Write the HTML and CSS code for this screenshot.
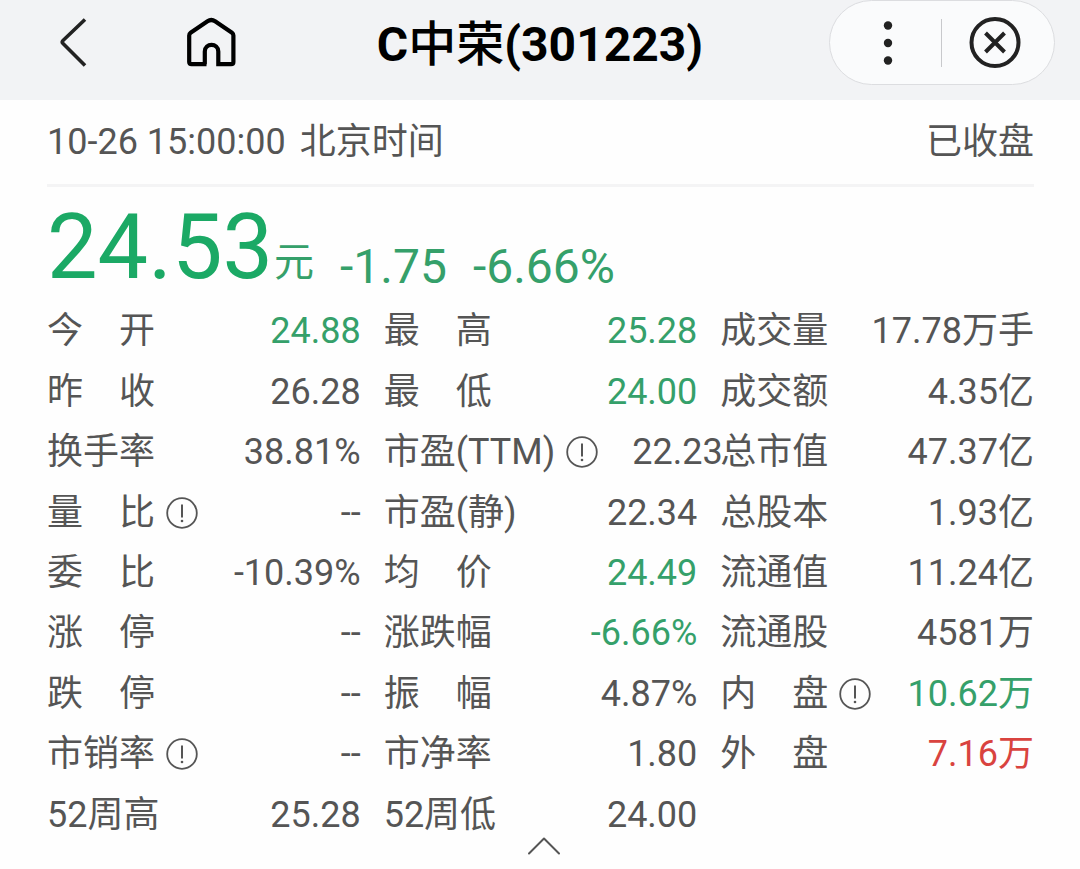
FILE: index.html
```
<!DOCTYPE html>
<html lang="zh-CN">
<head>
  <meta charset="UTF-8">
  <meta name="viewport" content="width=device-width, initial-scale=1.0">
  <title>C中荣(301223)</title>
  <link rel="stylesheet" href="styles.css">
</head>
<body>
  <svg class="sprite" aria-hidden="true">
    <symbol id="info" viewBox="0 0 32 32">
      <circle cx="16" cy="16" r="14.8" fill="none" stroke="currentColor" stroke-width="1.8"/>
      <path d="M16 7.500v13" fill="none" stroke="currentColor" stroke-width="2"/>
      <circle cx="16" cy="24" r="1.300" fill="currentColor"/>
    </symbol>
  </svg>

  <header class="topbar">
    <nav class="nav">
      <button class="icon-btn" type="button" aria-label="返回">
        <svg width="52" height="52" viewBox="0 0 52 52" fill="none" stroke="#222" stroke-width="3.6" stroke-linejoin="round">
          <path d="M38 2.500 L16 23.500 Q14.500 25 16 26.500 L38 48.500"/>
        </svg>
      </button>
      <button class="icon-btn" type="button" aria-label="首页">
        <svg width="52" height="52" viewBox="0 0 52 52" fill="none" stroke="#000" stroke-width="4.200">
          <path d="M20.500 47.200H5.500Q3.200 47.200 3.200 45V18.500Q3.200 16.800 4.600 15.800L21.500 4.300Q25.300 1.700 29.100 4.300L46 15.800Q47.400 16.800 47.400 18.500V45Q47.400 47.200 45.100 47.200H32.300V34.500C32.300 25.600 18.800 25.600 18.800 34.500V47.200"/>
        </svg>
      </button>
    </nav>
    <h1 class="title">C<span class="title-name">中荣</span>(301223)</h1>
    <div class="capsule">
      <button class="capsule-btn" type="button" aria-label="更多">
        <svg width="52" height="52" viewBox="0 0 52 52" fill="#222">
          <circle cx="26" cy="8.500" r="4.200"/>
          <circle cx="26" cy="26" r="4.200"/>
          <circle cx="26" cy="43.500" r="4.200"/>
        </svg>
      </button>
      <span class="capsule-line"></span>
      <button class="capsule-btn" type="button" aria-label="关闭">
        <svg width="52" height="52" viewBox="0 0 52 52" fill="none" stroke="#222" stroke-width="4">
          <circle cx="26" cy="25.500" r="23.500"/>
          <path d="M16.500 16l19 19M35.500 16l-19 19"/>
        </svg>
      </button>
    </div>
  </header>

  <main class="quote">
    <div class="status">
      <span class="time"><span>10-26 15:00:00</span><span>北京时间</span></span>
      <span>已收盘</span>
    </div>

    <div class="price down">
      <span class="price-now">24.53</span>
      <span class="price-unit">元</span>
      <span class="price-change">-1.75</span>
      <span class="price-change">-6.66%</span>
    </div>

    <dl class="stats">
      <div class="stat"><dt>今　开</dt><dd class="down">24.88</dd></div>
      <div class="stat"><dt>最　高</dt><dd class="down">25.28</dd></div>
      <div class="stat"><dt>成交量</dt><dd>17.78万手</dd></div>

      <div class="stat"><dt>昨　收</dt><dd>26.28</dd></div>
      <div class="stat"><dt>最　低</dt><dd class="down">24.00</dd></div>
      <div class="stat"><dt>成交额</dt><dd>4.35亿</dd></div>

      <div class="stat"><dt>换手率</dt><dd>38.81%</dd></div>
      <div class="stat"><dt>市盈(TTM)<button class="info" type="button" aria-label="说明"><svg><use href="#info"/></svg></button></dt><dd>22.23</dd></div>
      <div class="stat"><dt>总市值</dt><dd>47.37亿</dd></div>

      <div class="stat"><dt>量　比<button class="info" type="button" aria-label="说明"><svg><use href="#info"/></svg></button></dt><dd>--</dd></div>
      <div class="stat"><dt>市盈(静)</dt><dd>22.34</dd></div>
      <div class="stat"><dt>总股本</dt><dd>1.93亿</dd></div>

      <div class="stat"><dt>委　比</dt><dd>-10.39%</dd></div>
      <div class="stat"><dt>均　价</dt><dd class="down">24.49</dd></div>
      <div class="stat"><dt>流通值</dt><dd>11.24亿</dd></div>

      <div class="stat"><dt>涨　停</dt><dd>--</dd></div>
      <div class="stat"><dt>涨跌幅</dt><dd class="down">-6.66%</dd></div>
      <div class="stat"><dt>流通股</dt><dd>4581万</dd></div>

      <div class="stat"><dt>跌　停</dt><dd>--</dd></div>
      <div class="stat"><dt>振　幅</dt><dd>4.87%</dd></div>
      <div class="stat"><dt>内　盘<button class="info" type="button" aria-label="说明"><svg><use href="#info"/></svg></button></dt><dd class="down">10.62万</dd></div>

      <div class="stat"><dt>市销率<button class="info" type="button" aria-label="说明"><svg><use href="#info"/></svg></button></dt><dd>--</dd></div>
      <div class="stat"><dt>市净率</dt><dd>1.80</dd></div>
      <div class="stat"><dt>外　盘</dt><dd class="up">7.16万</dd></div>

      <div class="stat"><dt>52周高</dt><dd>25.28</dd></div>
      <div class="stat"><dt>52周低</dt><dd>24.00</dd></div>
    </dl>

    <button class="collapse" type="button" aria-label="收起">
      <svg width="34" height="20" viewBox="0 0 34 20" fill="none" stroke="#555" stroke-width="2" stroke-linecap="round" stroke-linejoin="round">
        <path d="M2 17.500L17 2.500L32 17.500"/>
      </svg>
    </button>
  </main>
</body>
</html>
```

FILE: styles.css
```
* {
  box-sizing: border-box;
}
body {
  font-family: Roboto, "Noto Sans CJK SC", sans-serif;
  font-size: 36px;
  color: #555;
  margin: 0;
  min-height: 100vh;
  display: flex;
  flex-direction: column;
  background: #fefefe;
}
button {
  padding: 0;
  border: none;
  background: none;
  color: inherit;
  cursor: pointer;
}
svg {
  display: block;
}
.sprite {
  display: none;
}

/* top bar */
.topbar {
  display: grid;
  grid-template-columns: 1fr auto 1fr;
  align-items: start;
  height: 100px;
  background: #f2f3f5;
}
.nav {
  display: flex;
  gap: 87px;
  padding: 17px 0 0 47px;
}
.title {
  margin: 0;
  padding-top: 10px;
  font-size: 48px;
  line-height: 70px;
  font-weight: bold;
  color: #000;
}
.title-name {
  font-weight: 500;
}
.capsule {
  justify-self: end;
  display: flex;
  align-items: center;
  justify-content: space-between;
  width: 226px;
  height: 85px;
  margin-right: 25px;
  padding: 0 33px 0 32px;
  border: 1px solid #dcdde0;
  border-radius: 43px;
  background: #fafbfc;
}
.capsule-line {
  width: 1px;
  height: 48px;
  background: #c8c9cc;
}

/* quote */
.quote {
  flex: 1;
  display: flex;
  flex-direction: column;
  position: relative;
  padding: 0 46px 24px 47px;
}
.status {
  display: flex;
  justify-content: space-between;
  line-height: 84px;
  border-bottom: 3px solid #f4f4f5;
}
.time {
  display: flex;
  gap: 14px;
}
.price {
  display: flex;
  align-items: flex-end;
  height: 114px;
  padding-bottom: 8px;
}
.price-now {
  font-size: 90px;
  line-height: 90px;
  color: #1ba965;
}
.price-unit {
  margin: 0 26px 0 1px;
  font-size: 40px;
  line-height: 60px;
}
.price-change {
  margin-right: 26px;
  font-size: 48px;
  line-height: 52px;
}
.stats {
  flex: 1;
  display: grid;
  grid-template-columns: repeat(3, minmax(0, 1fr));
  grid-auto-rows: 1fr;
  column-gap: 23px;
  margin: 0;
  line-height: 60px;
}
.stat {
  display: flex;
  align-items: center;
  justify-content: space-between;
  white-space: nowrap;
}
.stat dt {
  display: flex;
  align-items: center;
}
.stat dd {
  margin: 0 0 0 34px;
}
.info {
  margin-left: 11px;
}
.info svg {
  width: 32px;
  height: 32px;
}
.down {
  color: #35a06a;
}
.up {
  color: #d9433f;
}
.collapse {
  position: absolute;
  bottom: 13px;
  left: 50%;
  margin-left: -13px;
}
```
